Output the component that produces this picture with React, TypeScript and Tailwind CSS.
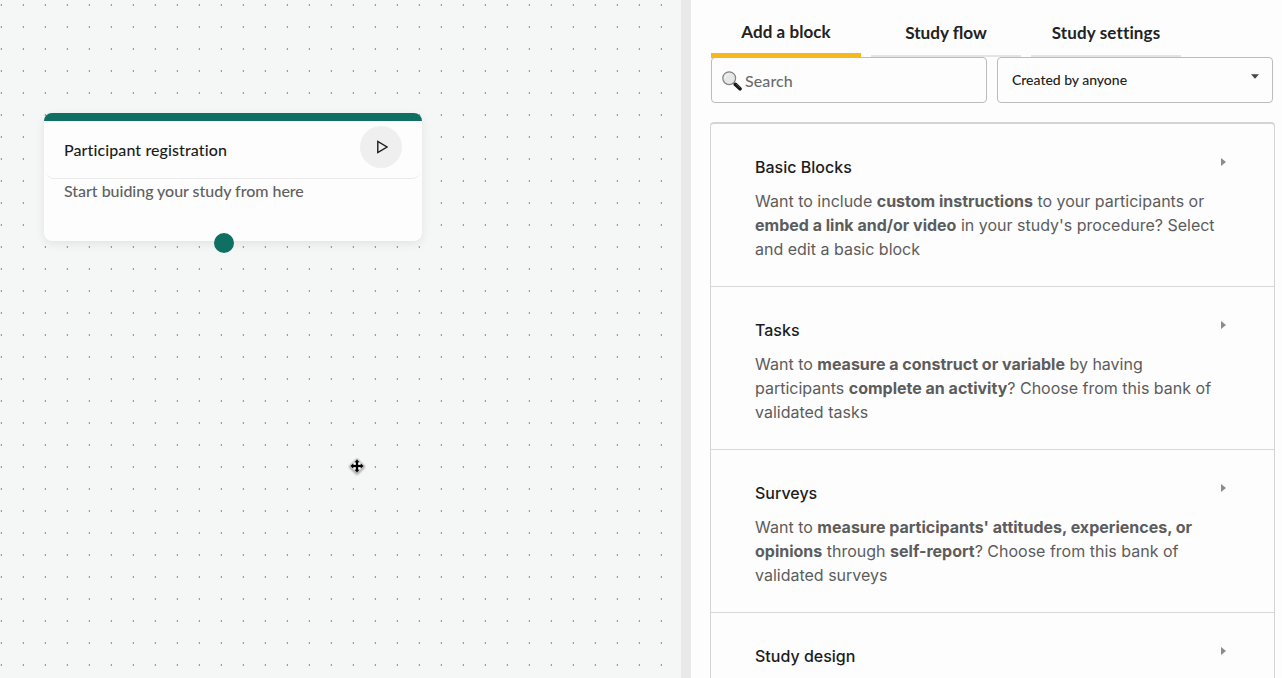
import type { ReactNode } from "react";

const tabs = [
  { label: "Add a block", active: true, text: "tracking-[0.05px] [font-variant-ligatures:common-ligatures]" },
  { label: "Study flow", active: false, text: "text-[17.2px]" },
  { label: "Study settings", active: false, text: "tracking-[0.14px] [font-variant-ligatures:none]" },
];

const blocks: { title: string; lines: ReactNode[] }[] = [
  {
    title: "Basic Blocks",
    lines: [
      <>Want to include <b>custom instructions</b> to your participants or</>,
      <><b>embed a link and/or video</b> in your study's procedure? Select</>,
      <>and edit a basic block</>,
    ],
  },
  {
    title: "Tasks",
    lines: [
      <>Want to <b>measure a construct or variable</b> by having</>,
      <>participants <b>complete an activity</b>? Choose from this bank of</>,
      <>validated tasks</>,
    ],
  },
  {
    title: "Surveys",
    lines: [
      <>Want to <b>measure participants' attitudes, experiences, or</b></>,
      <><b>opinions</b> through <b>self-report</b>? Choose from this bank of</>,
      <>validated surveys</>,
    ],
  },
  { title: "Study design", lines: [] },
];

function DotGrid() {
  return (
    <svg className="absolute inset-0 h-full w-full" aria-hidden="true">
      <defs>
        <pattern id="dots" width="22" height="22" patternUnits="userSpaceOnUse">
          <rect x="0" y="4" width="1" height="2" fill="#e3e5e4" />
          <rect x="1" y="4" width="1" height="2" fill="#9b9d9c" />
        </pattern>
      </defs>
      <rect width="100%" height="100%" fill="url(#dots)" />
    </svg>
  );
}

function Magnifier() {
  return (
    <svg width="20" height="20" viewBox="0 0 20 20" className="shrink-0" aria-hidden="true">
      <path d="M11.4 11.6l2.4 2.4" stroke="#666" strokeWidth="1.8" />
      <path d="M13.4 13.4l4.6 4.4" stroke="#171717" strokeWidth="3.6" strokeLinecap="round" />
      <path d="M13.8 12.8l4.2 4" stroke="#666" strokeWidth=".7" />
      <circle cx="7.2" cy="7.2" r="6.4" fill="#e5e7e9" stroke="#858585" strokeWidth="1.2" />
      <path d="M3 7.2a4.3 4.3 0 0 1 4.3-4.3" fill="none" stroke="#fafafa" strokeWidth="1" />
    </svg>
  );
}

function MoveCursor() {
  return (
    <svg
      width="16"
      height="16"
      viewBox="0 0 16 16"
      className="absolute top-[458px] left-[349px] drop-shadow-[0_1px_1px_rgba(0,0,0,0.45)]"
      aria-hidden="true"
    >
      <path d="M8 .5L15.5 8 8 15.5.5 8z" fill="#fff" stroke="#bbb" strokeWidth=".8" />
      <path
        d="M8 1.5l2.4 2.7H9V7h2.8V5.6L14.5 8l-2.7 2.4V9H9v2.8h1.4L8 14.5l-2.4-2.7H7V9H4.2v1.4L1.5 8l2.7-2.4V7H7V4.2H5.6z"
        fill="#000"
        stroke="#000"
        strokeWidth=".3"
      />
    </svg>
  );
}

function StartNode() {
  return (
    <article className="absolute top-[113px] left-[44px] flex h-32 w-[378px] flex-col rounded-lg bg-[#fdfdfd] shadow-[0_3px_10px_rgba(0,0,0,0.08)]">
      <div className="h-2 shrink-0 rounded-t-lg bg-[#0f6f62]" />
      <header className="mx-[2px] flex h-[58px] shrink-0 items-center justify-between rounded-b-lg border-b border-[#ebebeb] px-[18px]">
        <h2 className="text-[16px] leading-6 font-medium tracking-[0.1px] text-[#1c1c1c] [font-variant-ligatures:none]">Participant registration</h2>
        <button className="-mt-[5px] flex size-[42px] items-center justify-center rounded-full bg-[#efefef]" aria-label="Play">
          <svg width="14" height="16" viewBox="0 0 14 16" aria-hidden="true">
            <path d="M3.8 2.4v11.2L13 8z" fill="none" stroke="#1c1c1c" strokeWidth="1.4" />
          </svg>
        </button>
      </header>
      <p className="px-5 text-[16px] leading-6 font-medium tracking-[-0.03px] text-[#606060]">Start buiding your study from here</p>
      <span className="absolute top-[120px] left-[170px] size-5 rounded-full bg-[#0f6f62]" />
    </article>
  );
}

export default function App() {
  return (
    <div className="flex h-[678px] w-[1282px] overflow-hidden bg-[#fdfdfd] font-['Lato','Liberation_Sans',sans-serif]">
      <main className="relative w-[681px] shrink-0 bg-[#f5f7f6]">
        <DotGrid />
        <StartNode />
        <MoveCursor />
      </main>
      <div className="w-[10px] shrink-0 bg-[#e9e9e9]" />
      <aside className="flex w-[591px] shrink-0 flex-col">
        <nav className="relative z-10 flex h-[57px] shrink-0 items-start gap-[10px] pl-5">
          {tabs.map((tab) => (
            <button
              key={tab.label}
              className={
                tab.active
                  ? "flex h-[58px] w-[150px] flex-col items-center justify-end border-b-5 border-[#f6b81c] pb-[9px] text-[17px] leading-6 font-bold whitespace-nowrap text-[#222]"
                  : "flex h-[57px] w-[150px] flex-col items-center justify-end border-b-2 border-[#e3e5e4] pb-[10px] text-[17px] leading-6 font-bold whitespace-nowrap text-[#222]"
              }
            >
              <span className={tab.text}>{tab.label}</span>
            </button>
          ))}
        </nav>
        <div className="flex h-[46px] shrink-0 gap-[10px] pl-5">
          <div className="flex w-[276px] items-center gap-[3px] rounded-[4px] border border-[#bcbcbc] pt-[2px] pl-[10px]">
            <Magnifier />
            <span className="text-[16px] leading-6 font-medium tracking-[0.1px] text-[#6b6b6b]">Search</span>
          </div>
          <div className="flex w-[276px] items-center justify-between rounded-[4px] border border-[#bcbcbc] pr-[13px] pl-[14px]">
            <span className="text-[14px] leading-5 font-medium tracking-[-0.02px] text-[#222]">Created by anyone</span>
            <svg width="8" height="5" viewBox="0 0 8 5" className="-mt-2" aria-hidden="true">
              <path d="M0 .3h8L4 4.7z" fill="#454545" />
            </svg>
          </div>
        </div>
        <section className="mt-[19px] ml-[19px] h-[620px] w-[565px] shrink-0 rounded-t-[4px] border-x border-t-2 border-[#d4d4d4] font-['Inter','Liberation_Sans',sans-serif]">
          {blocks.map((block) => (
            <div key={block.title} className="flex h-[163px] justify-between border-b border-[#d8d8d8] pt-[31px] pr-12 pl-11">
              <div className="text-[16px] leading-6 whitespace-nowrap">
                <h3 className="font-medium text-[#1c1c1c]">{block.title}</h3>
                <p className="mt-[10px] text-[#5c5c5c]">
                  {block.lines.map((line, i) => (
                    <span key={i} className="block">{line}</span>
                  ))}
                </p>
              </div>
              <svg width="5" height="8" viewBox="0 0 5 8" className="mt-[3px] shrink-0" aria-hidden="true">
                <path d="M0 0v8l5-4z" fill="#8c8c8c" />
              </svg>
            </div>
          ))}
        </section>
      </aside>
    </div>
  );
}
